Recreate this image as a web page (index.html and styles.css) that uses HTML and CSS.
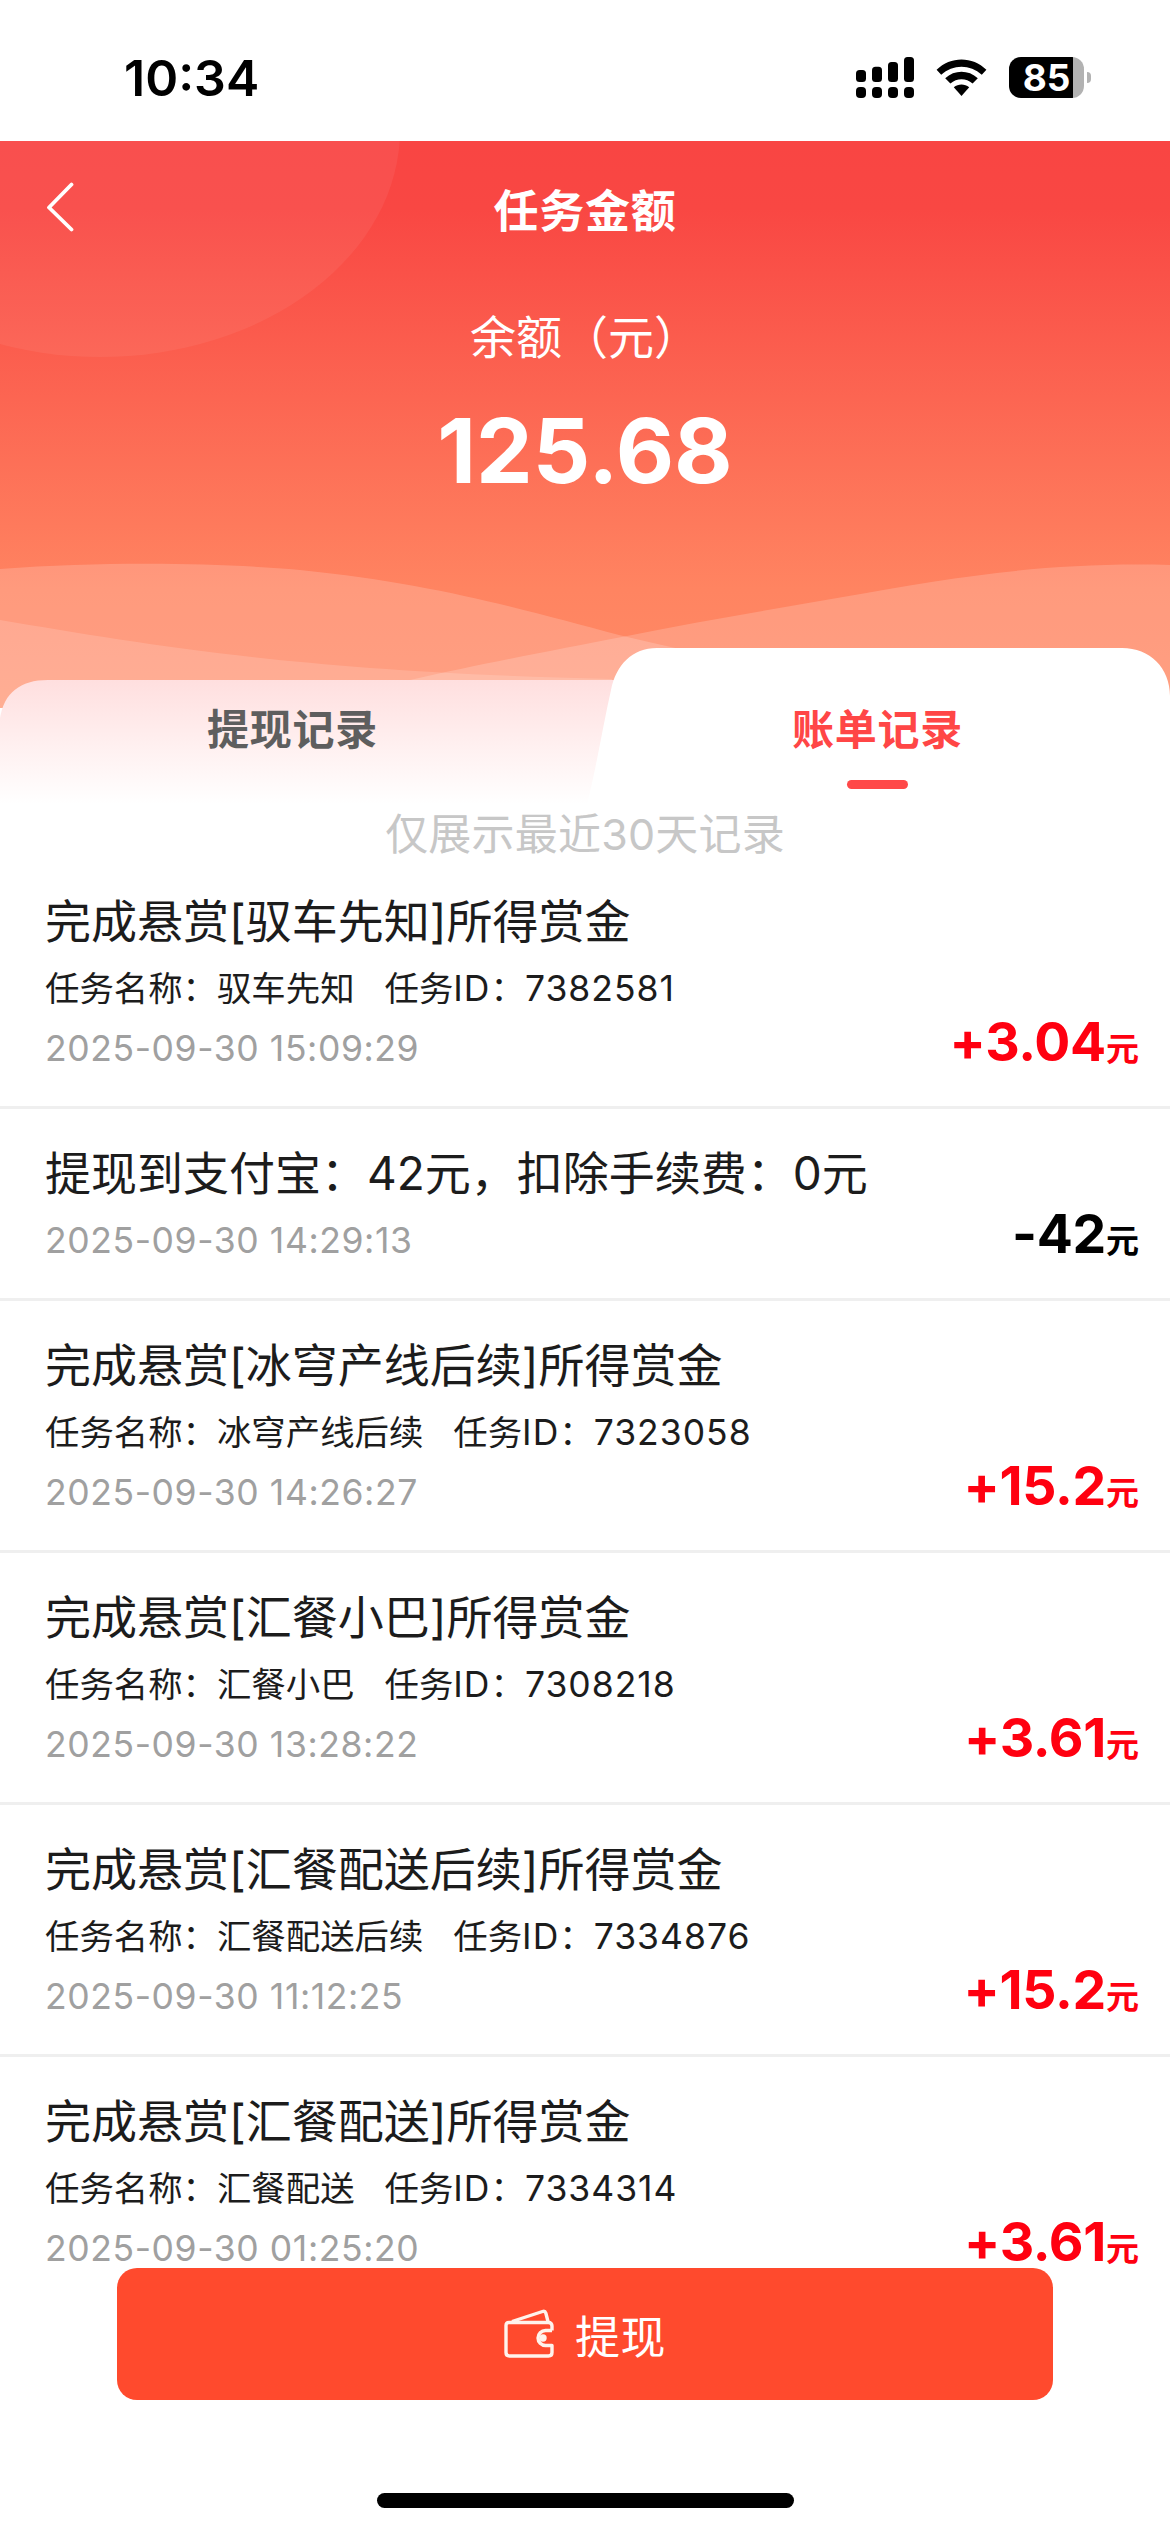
FILE: index.html
```html
<!DOCTYPE html>
<html lang="zh-CN">
<head>
<meta charset="utf-8">
<title>任务金额</title>
<link rel="stylesheet" href="styles.css">
</head>
<body>
<div class="screen">
  <div class="status">
    <span class="clock">10:34</span>
    <div class="indicators">
      <svg class="signal" width="58" height="41" viewBox="0 0 58 41">
        <rect x="0" y="13" width="10" height="12" rx="3.5"/><rect x="16" y="9.7" width="10" height="15.3" rx="3.5"/><rect x="32" y="5" width="10" height="20" rx="3.5"/><rect x="48" y="0" width="10" height="25" rx="3.5"/>
        <rect x="0" y="30" width="10" height="11" rx="4"/><rect x="16" y="30" width="10" height="11" rx="4"/><rect x="32" y="30" width="10" height="11" rx="4"/><rect x="48" y="30" width="10" height="11" rx="4"/>
      </svg>
      <svg class="wifi" width="51" height="38" viewBox="0 0 51 38">
        <path d="M0.6 10.8C14.5-3 36.5-3 50.4 10.8L45.8 15.8C34.2 4.9 16.8 4.9 5.2 15.8Z"/>
        <path d="M9.2 19.2C18.5 10.6 32.5 10.6 41.8 19.2L36.6 24.6C30.2 18.9 20.8 18.9 14.4 24.6Z"/>
        <path d="M17.8 28.2C22.4 24.6 28.6 24.6 33.2 28.2L25.5 37Z"/>
      </svg>
      <div class="battery"><span class="level">85</span></div>
      <div class="nub"></div>
    </div>
  </div>

  <header class="hero">
    <svg class="art" width="1170" height="567" viewBox="0 141 1170 567">
      <ellipse cx="100" cy="130" rx="300" ry="227" fill="#fff" fill-opacity=".06"/>
      <path d="M0 569C110 561 220 563 300 570C440 584 530 612 619 635C700 655 760 665 860 672V708H0Z" fill="#fff" fill-opacity=".18"/>
      <path d="M410 680C490 662 550 651 627 636C700 621 770 610 843 597C960 576 1050 562 1170 565V708H410Z" fill="#fff" fill-opacity=".18"/>
      <path d="M0 620C150 645 300 672 612 679V708H0Z" fill="#fff" fill-opacity=".15"/>
    </svg>
    <nav class="nav">
      <svg class="back" width="28" height="52" viewBox="0 0 28 52"><path d="M25.500 3.500L3 26.500L25.500 48.500"/></svg>
      <h1 class="title">任务金额</h1>
      <span class="back"></span>
    </nav>
    <div class="label">余额（元）</div>
    <div class="balance">125.68</div>
  </header>

  <div class="tabs">
    <svg class="tabshape" width="1170" height="160" viewBox="0 648 1170 160">
      <defs>
        <linearGradient id="fade" x1="0" y1="0" x2="0" y2="1"><stop offset="0" stop-color="#ffdfdf"/><stop offset="1" stop-color="#fff"/></linearGradient>
      </defs>
      <path d="M0 708V804H640V680H48C20 680 4 693 0 718Z" fill="url(#fade)"/>
      <path d="M586 808C596 770 602 730 611 690C616 665 632 648 657 648H1122C1150 648 1170 668 1170 696V808Z" fill="#fff"/>
    </svg>
    <div class="tab"><span>提现记录</span></div>
    <div class="tab active"><span>账单记录</span><i class="bar"></i></div>
  </div>
  <p class="notice">仅展示最近30天记录</p>

  <main class="list">
    <section class="row">
      <div class="name">完成悬赏[驭车先知]所得赏金</div>
      <div class="task"><span>任务名称：驭车先知</span><span>任务<b>ID</b>：<b>7382581</b></span></div>
      <div class="foot"><time>2025-09-30 15:09:29</time><div class="amount">+3.04<small>元</small></div></div>
    </section>
    <section class="row">
      <div class="name">提现到支付宝：42元，扣除手续费：0元</div>
      <div class="foot"><time>2025-09-30 14:29:13</time><div class="amount out">-42<small>元</small></div></div>
    </section>
    <section class="row">
      <div class="name">完成悬赏[冰穹产线后续]所得赏金</div>
      <div class="task"><span>任务名称：冰穹产线后续</span><span>任务<b>ID</b>：<b>7323058</b></span></div>
      <div class="foot"><time>2025-09-30 14:26:27</time><div class="amount">+15.2<small>元</small></div></div>
    </section>
    <section class="row">
      <div class="name">完成悬赏[汇餐小巴]所得赏金</div>
      <div class="task"><span>任务名称：汇餐小巴</span><span>任务<b>ID</b>：<b>7308218</b></span></div>
      <div class="foot"><time>2025-09-30 13:28:22</time><div class="amount">+3.61<small>元</small></div></div>
    </section>
    <section class="row">
      <div class="name">完成悬赏[汇餐配送后续]所得赏金</div>
      <div class="task"><span>任务名称：汇餐配送后续</span><span>任务<b>ID</b>：<b>7334876</b></span></div>
      <div class="foot"><time>2025-09-30 11:12:25</time><div class="amount">+15.2<small>元</small></div></div>
    </section>
    <section class="row">
      <div class="name">完成悬赏[汇餐配送]所得赏金</div>
      <div class="task"><span>任务名称：汇餐配送</span><span>任务<b>ID</b>：<b>7334314</b></span></div>
      <div class="foot"><time>2025-09-30 01:25:20</time><div class="amount">+3.61<small>元</small></div></div>
    </section>
  </main>

  <footer class="dock">
    <button class="withdraw">
      <svg width="50" height="50" viewBox="0 0 50 50">
        <path d="M48 21.500V17Q48 13.500 44.500 13.500H5Q2 13.500 2 16.500V43.500Q2 47 5.500 47H44.500Q48 47 48 43.500V36.500H41.500A7.500 7.500 0 0 1 41.500 21.500H48"/>
        <path d="M8 12.500L38.500 2.500Q41 1.700 41.800 4L44 12.500"/>
        <circle cx="39" cy="29" r="3.700"/>
      </svg>
      <span>提现</span>
    </button>
    <div class="home"></div>
  </footer>
</div>
</body>
</html>
```
FILE: styles.css
```css
* { box-sizing: border-box; margin: 0; padding: 0; }

body {
  font-family: Inter, "Noto Sans CJK SC", sans-serif;
  color: #1c1c1c;
  background: #fff;
}

.screen {
  display: flex;
  flex-direction: column;
  width: 1170px;
  height: 2532px;
  overflow: hidden;
}

/* status bar */
.status {
  display: flex;
  justify-content: space-between;
  flex: none;
  height: 141px;
  padding: 57px 79px 0 124px;
  color: #000;
}
.clock { margin-top: -1px; font-size: 50px; font-weight: 600; line-height: 44px; }
.indicators { display: flex; align-items: center; height: 41px; }
.wifi { margin: 0 22px; }
.battery {
  width: 75px;
  height: 41px;
  border-radius: 12px;
  background: linear-gradient(90deg, #000 64px, #b2b2b2 64px);
  color: #fff;
  text-align: center;
}
.level { font-size: 37px; font-weight: 700; line-height: 42px; }
.nub { width: 4px; height: 11px; margin-left: 3px; border-radius: 0 4px 4px 0; background: #b2b2b2; }

/* header */
.hero {
  position: relative;
  flex: none;
  height: 567px;
  background: linear-gradient(#f94543, #f94743 12%, #ff8461 79%, #ff8b66);
  color: #fff;
  text-align: center;
}
.art { position: absolute; left: 0; top: 0; }
.nav {
  position: relative;
  display: flex;
  justify-content: space-between;
  align-items: center;
  height: 132px;
  padding: 0 46px;
}
.back { width: 28px; fill: none; stroke: #fff; stroke-width: 3.8; stroke-linecap: round; stroke-linejoin: round; }
.title { font-size: 45px; line-height: 64px; letter-spacing: 0.7px; font-weight: 700; padding-top: 9px; }
.label { position: relative; height: 64px; margin-top: 32px; font-size: 46px; line-height: 64px; }
.balance { position: relative; margin-top: 32px; font-size: 90px; font-weight: 700; line-height: 100px; }

/* tabs */
.tabs {
  position: relative;
  display: flex;
  flex: none;
  height: 160px;
  margin-top: -60px;
}
.tabshape { position: absolute; left: 0; top: 0; }
.tab {
  position: relative;
  display: flex;
  flex-direction: column;
  align-items: center;
  flex: 1;
  padding-top: 51px;
  color: #5e5e5e;
  font-size: 42px;
  font-weight: 700;
  line-height: 62px;
  letter-spacing: 0.8px;
}
.active { color: #ff4646; }
.bar { width: 61px; height: 9px; margin-top: 19px; border-radius: 5px; background: #ff4848; }

.notice {
  flex: none;
  height: 49px;
  color: #c7c7c7;
  font-size: 43px;
  line-height: 52px;
  letter-spacing: 0.2px;
  text-align: center;
}

/* records */
.list { flex: 1; min-height: 0; }
.row {
  height: 252px;
  padding: 32px 31px 0 45px;
  border-bottom: 3px solid #efefef;
}
.row:nth-child(2) { height: 192px; }
.row:last-child { border-bottom: 0; }
.name { height: 65px; font-size: 46px; line-height: 64px; white-space: nowrap; }
.task { display: flex; gap: 30px; height: 60px; font-size: 34.4px; line-height: 69px; }
.task b { font-size: 35.5px; font-weight: 400; letter-spacing: 1px; }
.foot { display: flex; justify-content: space-between; align-items: baseline; height: 61px; }
.foot time { color: #a0a0a0; font-size: 35.5px; line-height: 60px; letter-spacing: 0.6px; }
.amount { color: #ff0010; font-size: 53.5px; font-weight: 700; line-height: 56px; letter-spacing: -0.3px; }
.amount small { font-size: 33px; font-weight: 700; letter-spacing: 0; }
.out { color: #000; }

/* bottom action */
.dock {
  position: relative;
  display: flex;
  flex-direction: column;
  align-items: center;
  flex: none;
  height: 264px;
}
.withdraw {
  display: flex;
  justify-content: center;
  align-items: center;
  gap: 21px;
  width: 936px;
  height: 132px;
  border: 0;
  border-radius: 20px;
  background: #ff4a2d;
  color: #fff;
  font-family: inherit;
  font-size: 45px;
  letter-spacing: 0.4px;
}
.withdraw svg { fill: none; stroke: #fff3ec; stroke-width: 3.4; stroke-linejoin: round; }
.withdraw circle { fill: #fff3ec; stroke: none; }
.home { width: 417px; height: 15px; margin-top: 93px; border-radius: 8px; background: #000; }
```
